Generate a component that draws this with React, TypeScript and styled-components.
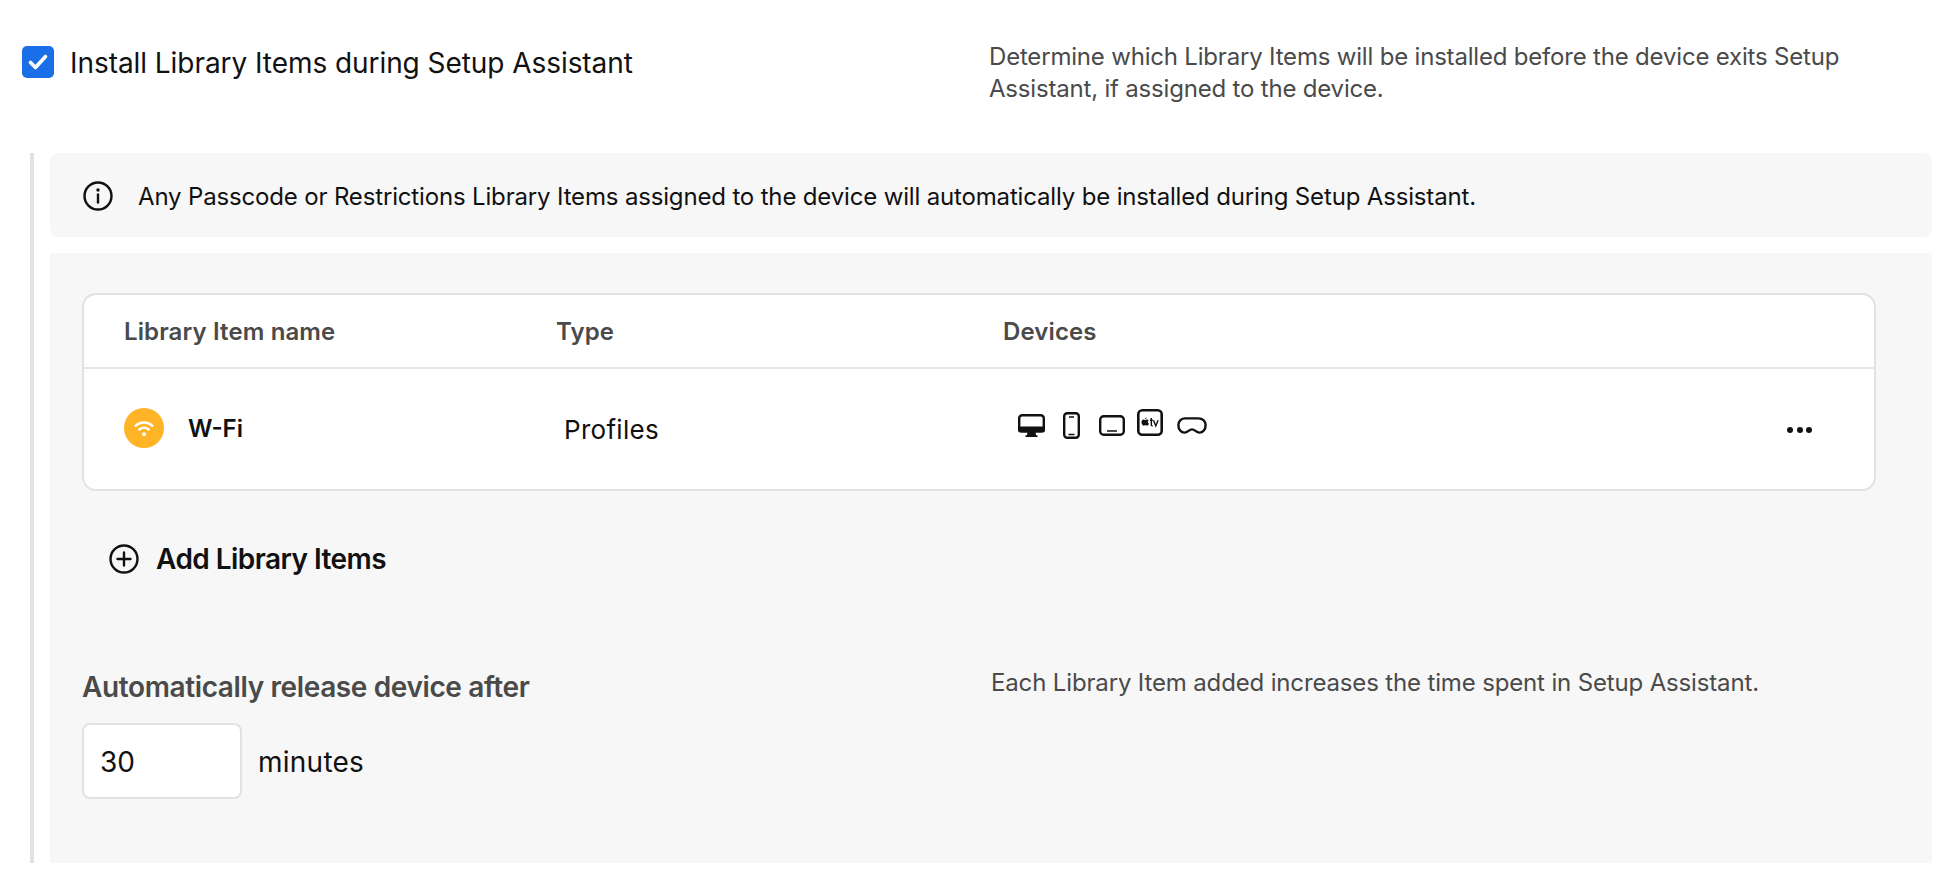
import React from "react";
import styled, { createGlobalStyle } from "styled-components";

const Global = createGlobalStyle`
  html, body { margin: 0; padding: 0; background: #fff; }
  body { font-family: "Inter", "Noto Sans", sans-serif; color: #111; -webkit-font-smoothing: antialiased; }
  * { box-sizing: border-box; }
`;

const Page = styled.div`
  width: 1954px;
  height: 888px;
  overflow: hidden;
  padding: 42px 22px 0 22px;
`;
const TopRow = styled.div`
  display: grid;
  grid-template-columns: 967px 1fr;
  height: 111px;
`;
const CheckRow = styled.div`
  display: flex;
  align-items: center;
  gap: 16px;
  height: 40px;
`;
const Check = styled.span`
  width: 32px;
  height: 32px;
  border-radius: 5px;
  background: #1a6fe8;
  display: flex;
  align-items: center;
  justify-content: center;
  flex: none;
`;
const Title = styled.span`
  font-size: 28px;
  line-height: 32px;
  letter-spacing: -0.06px;
  margin-top: 2px;
`;
const Desc = styled.div`
  font-size: 24px;
  line-height: 32px;
  letter-spacing: -0.19px;
  color: #4a4a4a;
  width: 880px;
  margin-top: -1px;
`;
const Section = styled.div`
  margin-left: 8px;
  border-left: 4px solid #e2e2e2;
  padding-left: 16px;
  display: flex;
  flex-direction: column;
  gap: 16px;
  width: 1902px;
`;
const Info = styled.div`
  height: 84px;
  border-radius: 8px;
  background: #f7f7f7;
  display: flex;
  align-items: center;
  gap: 25px;
  padding: 2px 0 0 33px;
  font-size: 24px;
  letter-spacing: -0.16px;
`;
const Panel = styled.div`
  background: #f7f7f7;
  height: 610px;
  padding: 40px 56px 0 32px;
`;
const Card = styled.div`
  background: #fff;
  border: 2px solid #e2e2e2;
  border-radius: 14px;
  height: 198px;
`;
const Columns = "432px 447px 1fr";
const Head = styled.div`
  display: grid;
  grid-template-columns: ${Columns};
  align-items: center;
  height: 74px;
  padding-left: 40px;
  border-bottom: 2px solid #e6e6e6;
  font-size: 24px;
  font-weight: 600;
  letter-spacing: 0.12px;
  color: #4a4a4a;
`;
const Row = styled.div`
  display: grid;
  grid-template-columns: ${Columns} 87px;
  align-items: center;
  height: 118px;
  padding-left: 40px;
`;
const NameCell = styled.div`
  display: flex;
  align-items: center;
  gap: 24px;
  font-size: 24px;
  font-weight: 600;
`;
const Badge = styled.span`
  width: 40px;
  height: 40px;
  border-radius: 50%;
  background: #ffb428;
  display: flex;
  align-items: center;
  justify-content: center;
`;
const TypeCell = styled.div`
  padding-left: 8px;
  font-size: 26px;
  letter-spacing: 0.3px;
  margin-top: 2px;
`;
const Devices = styled.div`
  display: flex;
  align-items: center;
  padding-left: 15px;
  margin-top: -5px;
`;
const DeviceIcon = styled.span<{ $left: number; $lift?: number }>`
  display: flex;
  margin-left: ${(p) => p.$left}px;
  margin-top: ${(p) => -(p.$lift ?? 0)}px;
`;
const Dots = styled.div`
  display: flex;
  gap: 3.5px;
  margin-top: 3px;
`;
const Dot = styled.span`
  width: 6px;
  height: 6px;
  border-radius: 50%;
  background: #111;
`;
const AddRow = styled.div`
  display: flex;
  align-items: center;
  gap: 17px;
  margin: 53px 0 0 27px;
  height: 30px;
  font-size: 28px;
  font-weight: 600;
  letter-spacing: -0.56px;
`;
const Lower = styled.div`
  display: grid;
  grid-template-columns: 909px 1fr;
  margin-top: 91px;
`;
const ReleaseLabel = styled.div`
  font-size: 28px;
  font-weight: 600;
  letter-spacing: -0.38px;
  color: #4a4a4a;
  line-height: 44px;
  height: 44px;
`;
const Hint = styled.div`
  font-size: 24px;
  line-height: 32px;
  letter-spacing: -0.15px;
  color: #4a4a4a;
  margin-top: 2px;
`;
const InputRow = styled.div`
  display: flex;
  align-items: center;
  gap: 16px;
  margin-top: 14px;
  font-size: 28px;
  letter-spacing: 0.25px;
`;
const Field = styled.div`
  width: 160px;
  height: 76px;
  background: #fff;
  border: 2px solid #e2e2e2;
  border-radius: 8px;
  display: flex;
  align-items: center;
  padding: 2px 0 0 16px;
  font-size: 28px;
  letter-spacing: 0;
`;
const Unit = styled.span`
  margin-top: 2px;
`;

const Desktop = () => (
  <svg width="27" height="23" viewBox="0 0 27 23">
    <rect x="1.200" y="1.200" width="24.600" height="16" rx="3" fill="none" stroke="#111" strokeWidth="2.400" />
    <rect x="0" y="12.500" width="27" height="6" rx="2" fill="#111" />
    <path d="M9.500 18h8l.5 3.200h1.500V23h-12v-1.800H9z" fill="#111" />
  </svg>
);
const Phone = () => (
  <svg width="17" height="27" viewBox="0 0 17 27">
    <rect x="1.200" y="1.200" width="14.600" height="24.600" rx="3" fill="none" stroke="#111" strokeWidth="2.400" />
    <path d="M6 5h5M5.500 22.500h6" stroke="#111" strokeWidth="1.500" />
  </svg>
);
const Tablet = () => (
  <svg width="26" height="21" viewBox="0 0 26 21">
    <rect x="1.200" y="1.200" width="23.600" height="18.600" rx="3.500" fill="none" stroke="#111" strokeWidth="2.400" />
    <path d="M8 16h10" stroke="#111" strokeWidth="1.500" />
  </svg>
);
const TvSvg = () => (
  <svg width="26" height="27" viewBox="0 0 26 27">
    <rect x="1.300" y="1.300" width="23.400" height="24.400" rx="4" fill="none" stroke="#111" strokeWidth="2.600" />
    <path d="M8.200 11c.6 0 1.100-.5 1.900-.5.700 0 1.200.3 1.600.8-1.300.9-1.100 2.700.3 3.300-.4 1-1 2.100-1.900 2.100-.6 0-.9-.4-1.700-.4s-1 .4-1.700.4c-1.200 0-2.200-1.900-2.200-3.400 0-1.600 1-2.700 2.200-2.700.6 0 1 .4 1.500.4zM8.100 10.100c0-.9.700-1.600 1.500-1.700.1.900-.6 1.700-1.500 1.700z" fill="#111" />
    <path d="M14.300 9v6.400c0 1 .4 1.400 1.400 1.300M12.900 11.300h2.900M16.500 11.300l2.300 5.600 2.300-5.600" fill="none" stroke="#111" strokeWidth="1.400" />
  </svg>
);
const Vision = () => (
  <svg width="30" height="17" viewBox="0 0 30 17">
    <path d="M8.500 1.400h13c3.800 0 7.100 2.600 7.100 6.800 0 4.300-2.700 7.400-6.100 7.400-3.400 0-4.600-3.200-7.500-3.200s-4.100 3.200-7.500 3.200c-3.400 0-6.100-3.100-6.100-7.400 0-4.200 3.300-6.800 6.600-6.800z" fill="none" stroke="#111" strokeWidth="2.400" />
  </svg>
);
const Wifi = () => (
  <svg width="22" height="17" viewBox="0 0 22 17">
    <path d="M2.500 5.800c4.800-4.400 12.200-4.400 17 0M6.300 9.500c2.800-2.500 6.600-2.500 9.400 0" fill="none" stroke="#fff" strokeWidth="2.400" strokeLinecap="round" />
    <circle cx="11" cy="14.200" r="2" fill="#fff" />
  </svg>
);

export default function App() {
  return (
    <Page>
      <Global />
      <TopRow>
        <CheckRow>
          <Check>
            <svg width="22" height="18" viewBox="0 0 22 18">
              <path d="M3.500 9.500l5 5L18.500 3.500" fill="none" stroke="#fff" strokeWidth="3.600" strokeLinecap="round" strokeLinejoin="round" />
            </svg>
          </Check>
          <Title>Install Library Items during Setup Assistant</Title>
        </CheckRow>
        <Desc>Determine which Library Items will be installed before the device exits Setup Assistant, if assigned to the device.</Desc>
      </TopRow>
      <Section>
        <Info>
          <svg width="30" height="30" viewBox="0 0 30 30">
            <circle cx="15" cy="15" r="13.500" fill="none" stroke="#111" strokeWidth="2.400" />
            <path d="M15 13.500v8" stroke="#111" strokeWidth="2.400" strokeLinecap="round" />
            <circle cx="15" cy="9" r="1.700" fill="#111" />
          </svg>
          Any Passcode or Restrictions Library Items assigned to the device will automatically be installed during Setup Assistant.
        </Info>
        <Panel>
          <Card>
            <Head>
              <span>Library Item name</span>
              <span>Type</span>
              <span>Devices</span>
            </Head>
            <Row>
              <NameCell>
                <Badge><Wifi /></Badge>
                W-Fi
              </NameCell>
              <TypeCell>Profiles</TypeCell>
              <Devices>
                <DeviceIcon $left={0}><Desktop /></DeviceIcon>
                <DeviceIcon $left={18}><Phone /></DeviceIcon>
                <DeviceIcon $left={19}><Tablet /></DeviceIcon>
                <DeviceIcon $left={12} $lift={6}><TvSvg /></DeviceIcon>
                <DeviceIcon $left={14}><Vision /></DeviceIcon>
              </Devices>
              <Dots><Dot /><Dot /><Dot /></Dots>
            </Row>
          </Card>
          <AddRow>
            <svg width="30" height="30" viewBox="0 0 30 30">
              <circle cx="15" cy="15" r="13.500" fill="none" stroke="#111" strokeWidth="2.400" />
              <path d="M15 8.500v13M8.500 15h13" stroke="#111" strokeWidth="2.400" strokeLinecap="round" />
            </svg>
            Add Library Items
          </AddRow>
          <Lower>
            <div>
              <ReleaseLabel>Automatically release device after</ReleaseLabel>
              <InputRow>
                <Field>30</Field>
                <Unit>minutes</Unit>
              </InputRow>
            </div>
            <Hint>Each Library Item added increases the time spent in Setup Assistant.</Hint>
          </Lower>
        </Panel>
      </Section>
    </Page>
  );
}
